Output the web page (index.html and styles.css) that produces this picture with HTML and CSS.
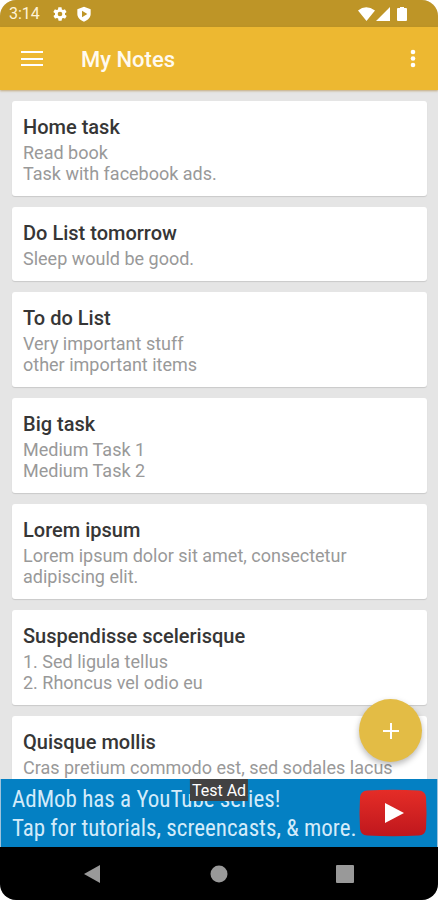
FILE: index.html
```html
<!DOCTYPE html>
<html lang="en">
<head>
<meta charset="utf-8">
<meta name="viewport" content="width=device-width, initial-scale=1">
<title>My Notes</title>
<link rel="stylesheet" href="styles.css">
</head>
<body>
<div class="phone">
  <div class="status">
    <span class="time">3:14</span>
    <svg class="status-icon gear" viewBox="0 0 24 24" aria-hidden="true"><path d="M19.4 13c.1-.3.1-.6.1-1s0-.7-.1-1l2.1-1.6c.2-.2.3-.5.1-.7l-2-3.4c-.1-.2-.4-.3-.6-.2l-2.500 1c-.5-.4-1.100-.7-1.700-1l-.4-2.600c0-.3-.2-.5-.5-.5h-4c-.3 0-.5.2-.5.500l-.4 2.600c-.6.3-1.200.6-1.700 1l-2.500-1c-.2-.1-.5 0-.6.200l-2 3.400c-.1.2-.1.5.1.700L4.600 11c0 .3-.1.700-.1 1s0 .7.1 1l-2.100 1.600c-.2.2-.3.5-.1.700l2 3.400c.1.2.4.3.6.200l2.500-1c.5.400 1.100.7 1.700 1l.4 2.600c0 .3.2.5.5.500h4c.3 0 .5-.2.5-.5l.4-2.600c.6-.3 1.200-.6 1.700-1l2.500 1c.2.1.5 0 .6-.2l2-3.400c.1-.2.1-.5-.1-.7zM12 15.500a3.500 3.500 0 1 1 0-7 3.500 3.500 0 0 1 0 7z"/></svg>
    <svg class="status-icon" viewBox="0 0 24 24" aria-hidden="true"><path fill-rule="evenodd" d="M12 1 2 5v7c0 5 4 9 10 11.500C18 21 22 17 22 12V5zM9 7l8 5-8 5z"/></svg>
    <svg class="signals" viewBox="0 0 52 16" aria-hidden="true"><path d="M0 4.500Q8 -2 17 4.500L8.500 15zM18 15 32 1v14zM39 3q0-1 1-1h2V1h4v1h2q1 0 1 1v11q0 1-1 1h-8q-1 0-1-1z"/></svg>
  </div>
  <header class="bar">
    <button class="icon-button" aria-label="Menu"><svg class="icon" viewBox="0 0 24 24"><path d="M1 4h22v2H1zM1 11h22v2H1zM1 17h22v2H1z"/></svg></button>
    <h1 class="heading">My Notes</h1>
    <button class="icon-button" aria-label="More options"><svg class="icon" viewBox="0 0 24 24"><circle cx="12" cy="5" r="2.300"/><circle cx="12" cy="11.500" r="2.300"/><circle cx="12" cy="18" r="2.300"/></svg></button>
  </header>
  <main class="notes">
    <article class="note"><h2>Home task</h2><p>Read book<br>Task with facebook ads.</p></article>
    <article class="note"><h2>Do List tomorrow</h2><p>Sleep would be good.</p></article>
    <article class="note"><h2>To do List</h2><p>Very important stuff<br>other important items</p></article>
    <article class="note"><h2>Big task</h2><p>Medium Task 1<br>Medium Task 2</p></article>
    <article class="note"><h2>Lorem ipsum</h2><p>Lorem ipsum dolor sit amet, consectetur<br>adipiscing elit.</p></article>
    <article class="note"><h2>Suspendisse scelerisque</h2><p>1. Sed ligula tellus<br>2. Rhoncus vel odio eu</p></article>
    <article class="note"><h2>Quisque mollis</h2><p>Cras pretium commodo est, sed sodales lacus</p></article>
  </main>
  <footer class="bottom">
    <button class="add" aria-label="Add note"><svg viewBox="0 0 24 24"><path d="M11 4h2v7h7v2h-7v7h-2v-7H4v-2h7z"/></svg></button>
    <a class="ad" href="#">
      <span class="ad-text">AdMob has a YouTube series!<br>Tap for tutorials, screencasts, &amp; more.</span>
      <svg class="play" viewBox="0 0 68 48" aria-hidden="true">
        <defs><linearGradient id="red" x1="0" y1="0" x2="0" y2="1"><stop offset="0" stop-color="#e52d27"/><stop offset="1" stop-color="#bf171d"/></linearGradient></defs>
        <path fill="url(#red)" d="M8 1.500Q34 0 60 1.500Q66 2 67 8Q68 24 67 40Q66 46 60 46.500Q34 48 8 46.500Q2 46 1 40Q0 24 1 8Q2 2 8 1.500z"/>
        <path fill="#fff" d="M26 14 45 24 26 34z"/>
      </svg>
      <span class="ad-label">Test Ad</span>
    </a>
    <nav class="nav">
      <button aria-label="Back"><svg viewBox="0 0 20 20"><path d="M1 10 17 1v18z"/></svg></button>
      <button aria-label="Home"><svg viewBox="0 0 20 20"><circle cx="10" cy="10" r="8.500"/></svg></button>
      <button aria-label="Recent apps"><svg viewBox="0 0 20 20"><rect x="1" y="1" width="18" height="18" rx="1"/></svg></button>
    </nav>
  </footer>
</div>
</body>
</html>
```
FILE: styles.css
```css
* { box-sizing: border-box; }
body { margin: 0; background: #fff; font-family: Roboto, "Liberation Sans", sans-serif; }
h1, h2, p { margin: 0; }
button { border: 0; padding: 0; background: none; cursor: pointer; }
svg { display: block; fill: #fff; }

.phone {
  display: flex;
  flex-direction: column;
  height: 100vh;
  overflow: hidden;
  border-radius: 16px;
  background: #e5e5e5;
}

.status {
  display: flex;
  align-items: center;
  gap: 8px;
  height: 27px;
  flex: none;
  padding: 1px 28px 0 9px;
  background: #be9527;
  color: #fff3d8;
}
.time { font-size: 16px; line-height: 24px; }
.status-icon { width: 16px; height: 16px; }
.gear { margin-left: 4px; }
.signals { width: 52px; height: 16px; margin-left: auto; }

.bar {
  display: flex;
  align-items: center;
  height: 63px;
  flex: none;
  padding: 0 9px 0 16px;
  background: #edb831;
  box-shadow: 0 1px 2px rgba(160, 110, 20, 0.5);
}
.icon-button { width: 32px; height: 32px; display: grid; place-items: center; }
.icon { width: 24px; height: 24px; }
.heading {
  flex: 1;
  margin-left: 33px;
  padding-top: 2px;
  color: #fffaf0;
  font-size: 22px;
  font-weight: 500;
  line-height: 28px;
}

.notes {
  display: flex;
  flex-direction: column;
  gap: 11px;
  flex: 1;
  min-height: 0;
  overflow: hidden;
  padding: 11px 11px 0 12px;
}
.note {
  flex: none;
  padding: 12px 11px;
  border-radius: 3px;
  background: #fff;
  box-shadow: 0 1px 1px rgba(0, 0, 0, 0.12);
}
.note h2 { color: #363636; font-size: 20px; font-weight: 500; line-height: 29px; }
.note p { color: #999; font-size: 18px; line-height: 21px; }

.bottom { position: relative; flex: none; }
.add {
  position: absolute;
  right: 16px;
  bottom: 138px;
  width: 63px;
  height: 63px;
  display: grid;
  place-items: center;
  border-radius: 50%;
  background: #e3bc45;
  box-shadow: 0 3px 6px rgba(0, 0, 0, 0.28);
}
.add svg { width: 24px; height: 24px; }

.ad {
  position: relative;
  display: flex;
  align-items: center;
  justify-content: space-between;
  height: 68px;
  padding: 0 10px 0 11px;
  border: solid #9fc3dc;
  border-width: 0 1px;
  background: #0480c3;
  color: #d3ebfa;
  text-decoration: none;
}
.ad-text {
  padding-top: 2px;
  font-family: "Roboto Condensed", "Liberation Sans Narrow", Roboto, sans-serif;
  font-size: 23px;
  line-height: 29px;
  white-space: nowrap;
}
.play { width: 68px; height: 48px; flex: none; }
.ad-label {
  position: absolute;
  top: 0;
  left: 50%;
  transform: translateX(-50%);
  padding: 2px 2px 0;
  background: #424242;
  color: #fff;
  font-size: 16px;
  line-height: 20px;
}

.nav {
  display: flex;
  justify-content: space-around;
  align-items: center;
  height: 53px;
  padding: 0 30px;
  background: #000;
}
.nav svg { width: 20px; height: 20px; fill: #999; }
```
